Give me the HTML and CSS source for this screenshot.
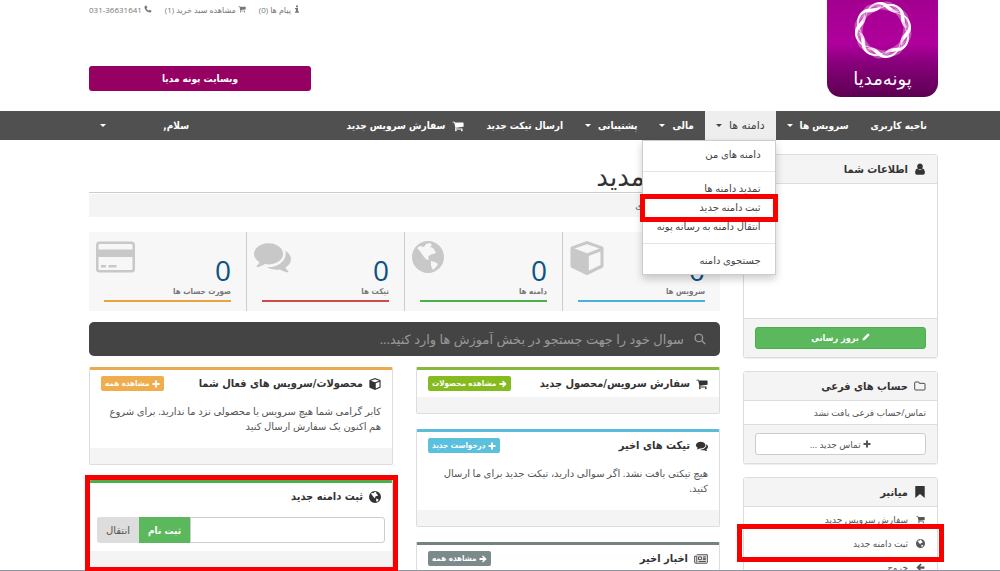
FILE: index.html
```html
<!DOCTYPE html>
<html lang="fa" dir="rtl">
<head>
<meta charset="utf-8">
<meta name="viewport" content="width=device-width, initial-scale=1">
<title>پونه مدیا</title>
<link rel="stylesheet" href="styles.css">
</head>
<body>
<svg class="sprite" aria-hidden="true">
  <symbol id="cart" viewBox="0 0 1664 1792"><path d="M640 1536q0 52-38 90t-90 38-90-38-38-90 38-90 90-38 90 38 38 90zm896 0q0 52-38 90t-90 38-90-38-38-90 38-90 90-38 90 38 38 90zm128-1088v512q0 24-16.500 42.500t-40.500 21.500l-1044 122q13 60 13 70 0 16-24 64h920q26 0 45 19t19 45-19 45-45 19h-1024q-26 0-45-19t-19-45q0-11 8-31.500t16-36 21.500-40 15.500-29.500l-177-823h-204q-26 0-45-19t-19-45 19-45 45-19h256q16 0 28.500 6.500t19.500 15.500 13 24.500 8 26 5.500 29.500 4.500 26h1201q26 0 45 19t19 45z"/></symbol>
  <symbol id="comments" viewBox="0 0 1792 1792"><path d="M1408 768q0 139-94 257t-256.500 186.500-353.500 68.500q-86 0-176-16-124 88-278 128-36 9-86 16h-3q-11 0-20.500-8t-11.500-21q-1-3-1-6.500t.5-6.500 2-6l2.500-5 3.500-5.500 4-5 4.500-5 4-4.500q5-6 23-25t26-29.500 22.500-29 25-38.500 20.500-44q-124-72-195-177t-71-224q0-139 94-257t256.500-186.500 353.500-68.500 353.500 68.500 256.500 186.500 94 257zm384 256q0 120-71 224.500t-195 176.500q10 24 20.500 44t25 38.500 22.500 29 26 29.500 23 25q1 1 4 4.500t4.500 5 4 5 3.500 5.500l2.500 5 2 6 .5 6.500-1 6.500q-3 14-13 22t-22 7q-50-7-86-16-154-40-278-128-90 16-176 16-271 0-472-132 58 4 88 4 161 0 309-45t264-129q125-92 192-212t67-254q0-77-23-152 129 71 204 178t75 230z"/></symbol>
  <symbol id="globe" viewBox="0 0 32 32"><path fill-rule="evenodd" d="M16 0a16 16 0 1 1 0 32a16 16 0 1 1 0-32zM5 7l3-2 4 1 2-3 4-1 2 2-2 2 3 1 2 3 1 2-3 1-3 1-2 2 1 2-2 1-3-3-2-3-3-4-1-1zM19 20l4 1 3 2-2 3-3 3-2-4z"/></symbol>
  <symbol id="cube" viewBox="0 0 34 34"><path fill-rule="evenodd" d="M17 0l15.500 5.500q1 .5 1 1.500v18q0 1-1 1.700L17.500 34h-1L1.500 26.700q-1-.7-1-1.700V7q0-1 1-1.500zM17 3.200L4.500 7.600 17 12.200 29.500 7.600zM18.800 29.800l11.700-5.700V10.500l-11.700 4.400z"/></symbol>
  <symbol id="card" viewBox="0 0 39 31"><path fill-rule="evenodd" d="M3.500 0h32A3.500 3.500 0 0 1 39 3.500v24a3.500 3.500 0 0 1-3.500 3.500h-32A3.500 3.500 0 0 1 0 27.500v-24A3.500 3.500 0 0 1 3.500 0zM3.500 2.500q-1 0-1 1V8h34V3.500q0-1-1-1zM2.500 15.500v12q0 1 1 1h32q1 0 1-1v-12zM5 23.500h5V26H5zM12.500 23.500h8V26h-8z"/></symbol>
  <symbol id="user" viewBox="0 0 16 16"><path d="M8 0.500a3.800 4 0 0 1 2.700 6.800Q14.500 7.600 14.500 13q0 2.700-2.500 2.700H4Q1.500 15.700 1.500 13q0-5.400 3.800-5.700A3.800 4 0 0 1 8 .5zM5 8.200Q8 10.200 11 8.200z"/></symbol>
  <symbol id="info" viewBox="0 0 16 16"><path d="M6 1h4v3.500H6zM4 6h6v7h2v2.500H4V13h2V8.500H4z"/></symbol>
  <symbol id="phone" viewBox="0 0 16 16"><path d="M1 3.500Q2 1 4.500 1L6.800 5 4.800 7q1.700 3 4.400 4.400l2-2 3.800 2.200Q15 14 12.500 15C7 15.500.5 9 1 3.500z"/></symbol>
  <symbol id="pencil" viewBox="0 0 16 16"><path d="M1 15l1-4.500L11 1.500q1-1 2 0l1.500 1.500q1 1 0 2L5.500 14z"/></symbol>
  <symbol id="plus" viewBox="0 0 16 16"><path d="M6 1h4v5h5v4h-5v5H6v-5H1V6h5z"/></symbol>
  <symbol id="right" viewBox="0 0 16 16"><path d="M8 .8L15.300 8 8 15.200l-2-2L9 10H1V6h8L6 2.800z"/></symbol>
  <symbol id="left" viewBox="0 0 16 16"><path d="M8 .8L.7 8 8 15.200l2-2L7 10h8V6H7l3-3.200z"/></symbol>
  <symbol id="bookmark" viewBox="0 0 16 16"><path d="M2.500 0h11q.8 0 .8.800V16L8 10.500 1.700 16V.8q0-.8.800-.8z"/></symbol>
  <symbol id="folder" viewBox="0 0 18 16"><path fill="none" stroke="currentColor" stroke-width="1.300" d="M1 3.500q0-1.500 1.500-1.500h4q1.500 0 1.500 1.500V4h7q1.500 0 1.500 1.500v7q0 1.500-1.500 1.500h-12.500Q1 14 1 12.500z"/></symbol>
  <symbol id="news" viewBox="0 0 20 16"><path fill="none" stroke="currentColor" stroke-width="1.300" d="M4 2h15v11q0 1-1 1H2.500Q1 14 1 12.500V4h3v9M6.500 5h4v4h-4zM12.500 5H17M12.500 7H17M12.500 9H17M6.500 11.500H17"/></symbol>
  <symbol id="search" viewBox="0 0 16 16"><circle cx="6.500" cy="6.500" r="5" fill="none" stroke="currentColor" stroke-width="1.800"/><path d="M10 11l1.200-1.200 4.300 4.300-1.300 1.300z"/></symbol>
  <symbol id="box" viewBox="0 0 16 16"><path fill-rule="evenodd" d="M8 0l7 2.500q.5.200.5.800v8.700q0 .6-.5.900L8 16l-7-3.100q-.5-.3-.5-.9V3.300q0-.6.5-.8zM8 1.500L2.500 3.500 8 5.600l5.500-2.100zM9 14l5-2.300V5L9 7z"/></symbol>
</svg>

<header class="wrap masthead">
  <a class="logo" href="#" aria-label="پونه‌مدیا">
    <svg class="logo-mark" viewBox="-30 -30 60 60" aria-hidden="true">
      <defs>
        <g id="twist">
          <path class="veil" d="M-9-19C-4-29 4-30 9-27C13-25 15-22 16-18C10-16 8-19 2-20C-3-21-6-20-9-19z"/>
          <path class="thread" d="M-6-21C0-28 8-27 14-20M-6-20C1-25 7-24 12-19"/>
          <path class="ribbon" d="M-17-13C-17-23-9-29-1-28C6-27 8-20 16-18C10-16 5-20 1-24C-5-28-15-24-17-13z"/>
        </g>
      </defs>
      <use href="#twist"/><use href="#twist" transform="rotate(45)"/><use href="#twist" transform="rotate(90)"/><use href="#twist" transform="rotate(135)"/><use href="#twist" transform="rotate(180)"/><use href="#twist" transform="rotate(225)"/><use href="#twist" transform="rotate(270)"/><use href="#twist" transform="rotate(315)"/>
    </svg>
    <span class="logo-name">پونه‌مدیا</span>
  </a>
  <div class="tools">
    <div class="toplinks">
      <a href="#"><svg class="ic"><use href="#info"/></svg> پیام ها (0)</a>
      <a href="#"><svg class="ic"><use href="#cart"/></svg> مشاهده سبد خرید (1)</a>
      <a href="#"><svg class="ic"><use href="#phone"/></svg> <bdi dir="ltr">031-36631641</bdi></a>
    </div>
    <a class="site-btn" href="#">وبسایت پونه مدیا</a>
  </div>
</header>

<nav class="navbar">
  <ul class="wrap menu">
    <li><a href="#">ناحیه کاربری</a></li>
    <li><a href="#">سرویس ها<i class="caret"></i></a></li>
    <li class="open"><a href="#">دامنه ها<i class="caret"></i></a>
      <ul class="dropdown">
        <li><a href="#">دامنه های من</a></li>
        <li class="sep"></li>
        <li><a href="#">تمدید دامنه ها</a></li>
        <li class="marked"><a href="#">ثبت دامنه جدید</a></li>
        <li><a href="#">انتقال دامنه به رسانه پونه</a></li>
        <li class="sep"></li>
        <li><a href="#">جستجوی دامنه</a></li>
      </ul>
    </li>
    <li><a href="#">مالی<i class="caret"></i></a></li>
    <li><a href="#">پشتیبانی<i class="caret"></i></a></li>
    <li><a href="#">ارسال تیکت جدید</a></li>
    <li><a href="#"><svg class="ic"><use href="#cart"/></svg>سفارش سرویس جدید</a></li>
    <li class="account"><a href="#">سلام,<i class="caret"></i></a></li>
  </ul>
</nav>

<div class="wrap page">
  <aside class="side">
    <section class="box">
      <h2><svg class="ic"><use href="#user"/></svg>اطلاعات شما</h2>
      <div class="details"></div>
      <div class="foot"><button class="btn green" type="button"><svg class="ic"><use href="#pencil"/></svg> بروز رسانی</button></div>
    </section>
    <section class="box">
      <h2><svg class="ic"><use href="#folder"/></svg>حساب های فرعی</h2>
      <p>تماس/حساب فرعی یافت نشد</p>
      <div class="foot"><button class="btn" type="button"><svg class="ic"><use href="#plus"/></svg> تماس جدید ...</button></div>
    </section>
    <section class="box">
      <h2><svg class="ic"><use href="#bookmark"/></svg>میانبر</h2>
      <ul class="shortcuts">
        <li><a href="#"><svg class="ic"><use href="#cart"/></svg>سفارش سرویس جدید</a></li>
        <li class="marked"><a href="#"><svg class="ic"><use href="#globe"/></svg>ثبت دامنه جدید</a></li>
        <li><a href="#"><svg class="ic"><use href="#left"/></svg>خروج</a></li>
      </ul>
    </section>
  </aside>

  <main class="main">
    <h1>خوش آمدید</h1>
    <div class="crumbs">پرتال / ناحیه کاربری</div>
    <div class="stats">
      <a class="stat blue" href="#"><svg class="big"><use href="#cube"/></svg><b>0</b><span>سرویس ها</span></a>
      <a class="stat grn" href="#"><svg class="big"><use href="#globe"/></svg><b>0</b><span>دامنه ها</span></a>
      <a class="stat red" href="#"><svg class="big"><use href="#comments"/></svg><b>0</b><span>تیکت ها</span></a>
      <a class="stat amber" href="#"><svg class="big"><use href="#card"/></svg><b>0</b><span>صورت حساب ها</span></a>
    </div>
    <form class="search">
      <svg class="ic"><use href="#search"/></svg>
      <input type="text" aria-label="جستجو" placeholder="سوال خود را جهت جستجو در بخش آموزش ها وارد کنید...">
    </form>
    <div class="cols">
      <div class="col">
        <section class="panel lime">
          <header><h3><svg class="ic"><use href="#cart"/></svg>سفارش سرویس/محصول جدید</h3><a class="tag" href="#"><svg class="ic"><use href="#right"/></svg> مشاهده محصولات</a></header>
          <footer></footer>
        </section>
        <section class="panel sky">
          <header><h3><svg class="ic"><use href="#comments"/></svg>تیکت های اخیر</h3><a class="tag" href="#"><svg class="ic"><use href="#plus"/></svg> درخواست جدید</a></header>
          <p>هیچ تیکتی یافت نشد. اگر سوالی دارید، تیکت جدید برای ما ارسال کنید.</p>
          <footer></footer>
        </section>
        <section class="panel slate">
          <header><h3><svg class="ic wide"><use href="#news"/></svg>اخبار اخیر</h3><a class="tag" href="#"><svg class="ic"><use href="#right"/></svg> مشاهده همه</a></header>
          <footer></footer>
        </section>
      </div>
      <div class="col">
        <section class="panel orange">
          <header><h3><svg class="ic"><use href="#box"/></svg>محصولات/سرویس های فعال شما</h3><a class="tag" href="#"><svg class="ic"><use href="#plus"/></svg> مشاهده همه</a></header>
          <p>کابر گرامی شما هیچ سرویس یا محصولی نزد ما ندارید. برای شروع هم اکنون یک سفارش ارسال کنید</p>
          <footer></footer>
        </section>
        <section class="panel leaf marked">
          <header><h3><svg class="ic"><use href="#globe"/></svg>ثبت دامنه جدید</h3></header>
          <form class="domain">
            <input type="text" aria-label="نام دامنه">
            <button class="reg" type="button">ثبت نام</button>
            <button class="move" type="button">انتقال</button>
          </form>
          <footer></footer>
        </section>
      </div>
    </div>
  </main>
</div>
</body>
</html>
```
FILE: styles.css
```css
* { box-sizing: border-box; }
html { overflow: hidden; }
body {
  margin: 0;
  min-height: 100vh;
  background: #fff;
  color: #555;
  font: 10px/15px "Open Sans", "DejaVu Sans", sans-serif;
}
body::after {
  content: "";
  position: fixed;
  inset: auto 0 0;
  height: 1px;
  background: #92959c;
}
a { color: inherit; text-decoration: none; }
ul { margin: 0; padding: 0; list-style: none; }
h1, h2, h3, p { margin: 0; }
button, input { font: inherit; color: inherit; }
.sprite { position: absolute; width: 0; height: 0; }
.ic { width: 12px; height: 12px; fill: currentColor; flex: none; }
.wrap { padding: 0 62px 0 89px; }
.menu > li > a, .site-btn, .box h2, .panel h3, .tag, .stat span, .green, .reg {
  font-family: "DejaVu Sans Condensed", "DejaVu Sans", sans-serif;
  font-weight: bold;
}

.masthead { display: flex; justify-content: space-between; height: 111px; }
.logo {
  display: flex;
  flex-direction: column;
  align-items: center;
  width: 111px;
  height: 97px;
  border-radius: 0 0 14px 14px;
  color: #fff;
  background: linear-gradient(#a3008f, #b0009c 45%, #8c0080 62%, #5c0051);
}
.logo-mark { width: 60px; height: 60px; }
.logo-name { font-size: 18px; line-height: 36px; }
.veil { fill: #e6a0dc; opacity: .5; }
.thread { fill: none; stroke: #fff; stroke-width: .4; opacity: .7; }
.ribbon { fill: #fff; }
.tools { display: flex; flex-direction: column; gap: 49px; width: 222px; }
.toplinks { display: flex; justify-content: space-between; width: 212px; align-self: flex-end; padding-top: 2px; font-size: 8px; color: #777; white-space: nowrap; }
.toplinks .ic { width: 8px; height: 8px; }
.site-btn { padding: 5px; border-radius: 3px; background: #960062; color: #fff; text-align: center; }

.navbar { background: #505050; color: #fff; }
.menu { display: flex; }
.menu > li { position: relative; }
.menu > li > a { display: flex; align-items: center; gap: 7px; height: 29px; padding: 0 11px; white-space: nowrap; }
.caret { border: 3px solid transparent; border-top-color: currentColor; border-bottom: 0; }
.menu .open { background: #eee; color: #444; }
.menu .open > a { font-family: "DejaVu Sans", sans-serif; font-size: 11px; font-weight: normal; }
.menu .account { flex: 0 1 111px; margin-inline-start: auto; }
.menu .account > a { justify-content: space-between; }
.dropdown {
  position: absolute;
  z-index: 3;
  top: 100%;
  right: 0;
  width: 134px;
  padding: 4px 0;
  background: #fff;
  border: 1px solid #ccc;
  box-shadow: 0 4px 8px rgba(0, 0, 0, .2);
  color: #444;
}
.dropdown a { display: block; padding: 0 14px; line-height: 19px; white-space: nowrap; }
.sep { height: 1px; margin: 7px 0; background: #e5e5e5; }
.marked { position: relative; }
.marked::after { content: ""; position: absolute; z-index: 4; border: 5px solid #f80000; pointer-events: none; }
.dropdown .marked::after { inset: -4px -3px -5px; }

.page { display: flex; gap: 23px; }
.side { flex: 0 0 195px; display: flex; flex-direction: column; gap: 13px; padding-top: 14px; }
.box { border: 1px solid #ddd; border-radius: 3px; background: #fff; box-shadow: 0 1px 1px #eee; }
.box h2 { display: flex; align-items: center; gap: 6px; height: 29px; padding: 0 11px; border-bottom: 1px solid #ddd; background: #f4f4f4; color: #333; font-size: 11px; }
.details { height: 134px; }
.box p { padding: 4px 11px; font-size: 9px; }
.foot { padding: 8px 11px; border-top: 1px solid #ddd; background: #f4f4f4; }
.btn { display: block; width: 100%; height: 22px; padding: 0; border: 1px solid #ccc; border-radius: 3px; background: #fff; font-size: 9px; }
.btn .ic { width: 8px; height: 8px; }
.green { background: #5cb85c; border-color: #4cae4c; color: #fff; }
.shortcuts a { display: flex; align-items: center; gap: 8px; height: 24px; padding: 0 12px; font-size: 9px; }
.shortcuts .ic { width: 9px; height: 9px; }
.shortcuts .marked::after { inset: -7px; }

.main { flex: 1; min-width: 0; }
h1 { height: 53px; padding-top: 20px; border-bottom: 1px solid #ccc; color: #333; font-size: 26px; line-height: 32px; font-weight: normal; }
.crumbs { height: 24px; padding: 4px 11px; border-top: 1px solid #fff; background: #f4f4f4; font-size: 9px; }
.stats { display: flex; margin-top: 15px; background: #f7f7f7; }
.stat { flex: 1; display: flex; flex-direction: column; position: relative; padding: 24px 15px 9px; height: 79px; color: #777; }
.stat + .stat { border-right: 1px solid #ccc; }
.stat b { color: #0c5283; font-size: 28px; line-height: 28px; font-weight: normal; }
.stat span { font-size: 8px; line-height: 16px; border-bottom: 2px solid; }
.blue span { border-color: #4bb0d8; }
.grn span { border-color: #4cae4c; }
.red span { border-color: #d04a48; }
.amber span { border-color: #eba340; }
.big { position: absolute; top: 9px; left: 7px; width: 39px; height: 32px; fill: #c8c8c8; }
.blue .big { width: 34px; height: 34px; }
.grn .big { width: 32px; }
.red .big { width: 37px; height: 37px; top: 6px; }
.search { display: flex; align-items: center; gap: 10px; height: 34px; margin: 11px 0; padding: 0 14px; border-radius: 5px; background: #444; color: #999; }
.search input { flex: 1; padding: 0; border: 0; outline: 0; background: none; font-size: 13px; }
.search input::placeholder { color: #999; opacity: 1; }
.cols { display: grid; grid-template-columns: 1fr 1fr; gap: 23px; }
.col { display: flex; flex-direction: column; gap: 15px; }
.panel { border: 1px solid #ddd; border-top: 3px solid; border-radius: 2px; background: #fff; }
.panel header { display: flex; align-items: center; justify-content: space-between; height: 27px; padding: 0 11px; }
.panel h3 { display: flex; align-items: center; gap: 6px; color: #333; font-size: 11px; white-space: nowrap; }
.panel h3 .wide { width: 14px; }
.panel p { padding: 7px 11px 14px; }
.panel footer { height: 16px; background: #f4f4f4; }
.tag { padding: 0 4px; border-radius: 2px; color: #fff; font-size: 8px; white-space: nowrap; }
.tag .ic { width: 8px; height: 8px; vertical-align: middle; }
.lime { border-top-color: #86b83a; } .lime .tag { background: #85bb1f; }
.sky { border-top-color: #5bbbdb; } .sky .tag { background: #5bc0de; }
.slate { border-top-color: #76827f; } .slate .tag { background: #7b8a8b; }
.orange { border-top-color: #eba950; } .orange .tag { background: #f0ad4e; }
.leaf { border-top-color: #4cae4c; }
.leaf.marked::after { inset: -8px -6px -5px -5px; }
.domain { display: flex; padding: 7px 7px 8px; }
.domain input { flex: 1; min-width: 0; height: 26px; border: 1px solid #ccc; border-radius: 0 3px 3px 0; }
.domain button { border: 0; padding: 0 9px; }
.reg { background: #5cb85c; color: #fff; }
.move { background: #ddd; border-radius: 3px 0 0 3px; }
```
